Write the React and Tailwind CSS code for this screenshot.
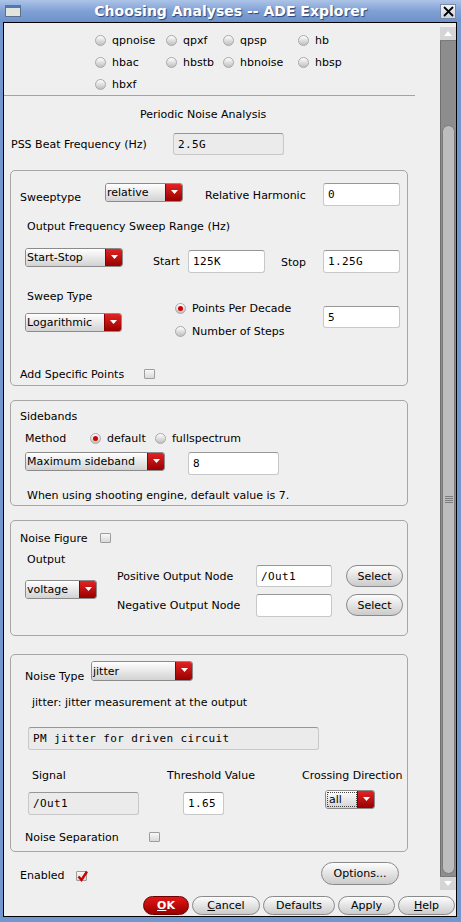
import React from "react";

const MONO = "font-['DejaVu_Sans_Mono',monospace] text-[11px] tracking-[0.4px]";

function Radio({ on }) {
  return (
    <span className="flex h-[11px] w-[11px] shrink-0 items-center justify-center rounded-full border border-[#a9a9a9] bg-linear-to-b from-white to-[#c0c0c0]">
      {on && <span className="h-[5px] w-[5px] rounded-full bg-[#d40000]" />}
    </span>
  );
}

function Check({ on, className = "" }) {
  return (
    <span
      className={`relative block h-[10px] w-[11px] shrink-0 rounded-[1px] border border-[#9d9d9d] bg-linear-to-b from-[#f8f8f8] to-[#d9d9d9] ${className}`}
    >
      {on && (
        <svg className="absolute left-[0px] top-[-2px]" width="11" height="12" viewBox="0 0 11 12">
          <path d="M1.5 6.5 L4.5 10 L10 1.5" fill="none" stroke="#d00000" strokeWidth="2.4" />
        </svg>
      )}
    </span>
  );
}

function Combo({ label, className = "", focus }) {
  return (
    <div className={`flex h-[19px] shrink-0 overflow-hidden rounded-[3px] border border-[#8b8b8b] ${className}`}>
      <div className="flex min-w-0 flex-1 items-center bg-linear-to-b from-white to-[#d2d2d2] pl-[1px]">
        {focus ? (
          <span className="flex h-[15px] flex-1 items-center border border-dotted border-[#444] pl-[1px]">{label}</span>
        ) : (
          label
        )}
      </div>
      <div className="flex w-[17px] shrink-0 items-center justify-center border-l border-[#8a0000] bg-linear-to-b from-[#e42222] to-[#980000]">
        <svg className="mb-[2px]" width="7" height="4" viewBox="0 0 7 4">
          <path d="M0 0h7L3.5 4z" fill="#fff" />
        </svg>
      </div>
    </div>
  );
}

function Field({ value, className = "", disabled }) {
  return (
    <div
      className={`flex shrink-0 items-center rounded-[3px] border border-[#c8c8c8] border-t-[#979797] pl-[4px] ${MONO} ${
        disabled ? "bg-[#ebebeb]" : "bg-white"
      } ${className}`}
    >
      {value}
    </div>
  );
}

function Btn({ children, className = "" }) {
  return (
    <button
      type="button"
      className={`flex shrink-0 items-center justify-center rounded-full border border-[#8a8a8a] bg-linear-to-b from-[#fdfdfd] to-[#cbcbcb] text-[11px] text-black ${className}`}
    >
      {children}
    </button>
  );
}

function Group({ className = "", children }) {
  return (
    <div className={`ml-[6px] flex w-[398px] shrink-0 flex-col rounded-[5px] border border-[#a6a6a6] pl-[9px] ${className}`}>
      {children}
    </div>
  );
}

const analyses = [
  ["qpnoise", "qpxf", "qpsp", "hb"],
  ["hbac", "hbstb", "hbnoise", "hbsp"],
  ["hbxf"],
];
const colW = ["w-[71px]", "w-[57px]", "w-[75px]", "w-[60px]"];

function TitleBar() {
  return (
    <div className="relative flex h-[22px] shrink-0 items-center bg-linear-to-b from-[#adc3e7] via-[#80a1d5] to-[#6d91cb] pl-[5px] pr-[5px]">
      <div className="h-[12px] w-[16px] border border-[#5d6f8f] border-t-[3px] border-t-[#4f78b5] bg-[#e2e5dc]" />
      <div className="flex-1 text-center text-[14px] font-bold text-white [text-shadow:1px_1px_1px_#2b4777]">
        Choosing Analyses -- ADE Explorer
      </div>
      <div className="flex h-[15px] w-[16px] items-center justify-center border border-[#7b8aa5] bg-linear-to-b from-[#f2f5fa] to-[#c9d3e3]">
        <svg width="11" height="11" viewBox="0 0 11 11">
          <path d="M1 1L10 10M10 1L1 10" stroke="#000" strokeWidth="1.8" />
        </svg>
      </div>
    </div>
  );
}

function ScrollBar() {
  return (
    <div className="flex w-[16px] shrink-0 flex-col pb-[1px] pt-[4px]">
      <div className="flex h-[14px] items-center justify-center border-b border-[#7b7b7b] bg-[#d5d5d5]">
        <svg width="8" height="5" viewBox="0 0 8 5">
          <path d="M4 0L8 5H0z" fill="#fff" />
        </svg>
      </div>
      <div className="flex flex-1 flex-col border-l border-[#707070] bg-[#8d8d8d] px-[1px] pb-[2px] pt-[84px]">
        <div className="flex flex-1 items-center justify-center rounded-full border border-[#7a7a7a] bg-[#bdbdbd]">
          <div className="flex w-[8px] flex-col gap-[1px]">
            <div className="h-px bg-[#7c7c7c]" />
            <div className="h-px bg-[#7c7c7c]" />
            <div className="h-px bg-[#7c7c7c]" />
            <div className="h-px bg-[#7c7c7c]" />
          </div>
        </div>
      </div>
      <div className="flex h-[14px] items-center justify-center border-t border-[#7b7b7b] bg-[#d5d5d5]">
        <svg width="8" height="5" viewBox="0 0 8 5">
          <path d="M0 0H8L4 5z" fill="#fff" />
        </svg>
      </div>
    </div>
  );
}

export default function App() {
  return (
    <div className="flex h-[922px] w-[461px] flex-col bg-[#7297cf] font-['DejaVu_Sans',sans-serif] text-[11px] leading-[13px] text-black">
      <TitleBar />
      <div className="mb-[5px] ml-[3px] mr-[4px] flex flex-1 flex-col border border-black bg-[#efefef]">
        <div className="flex h-[868px] shrink-0">
          <div className="flex flex-1 flex-col overflow-hidden">
            {/* analysis type radios */}
            <div className="flex shrink-0 flex-col pl-[91px] pt-[6px]">
              {analyses.map((row, r) => (
                <div key={r} className="flex h-[22px] items-center">
                  {row.map((name, c) => (
                    <div key={name} className={`flex items-center ${colW[c]}`}>
                      <Radio />
                      <span className="ml-[6px]">{name}</span>
                    </div>
                  ))}
                </div>
              ))}
            </div>
            <div className="h-0 w-[411px] shrink-0 border-t border-[#a3a3a3]" />

            <div className="mt-[8px] flex h-[20px] shrink-0 items-center pl-[136px]">Periodic Noise Analysis</div>

            <div className="mt-[9px] flex h-[22px] shrink-0 items-center pl-[7px]">
              <span className="w-[162px]">PSS Beat Frequency (Hz)</span>
              <Field value="2.5G" disabled className="h-[22px] w-[111px]" />
            </div>

            {/* sweep */}
            <Group className="mt-[15px] h-[216px]">
              <div className="mt-[12px] flex items-start">
                <span className="mt-[8px] w-[85px]">Sweeptype</span>
                <Combo label="relative" className="w-[78px]" />
                <span className="ml-[22px] mt-[6px] w-[118px]">Relative Harmonic</span>
                <Field value="0" className="h-[23px] w-[77px]" />
              </div>
              <div className="ml-[7px] mt-[14px]">Output Frequency Sweep Range (Hz)</div>
              <div className="mt-[15px] flex items-start">
                <Combo label="Start-Stop" className="ml-[5px] w-[98px]" />
                <span className="ml-[30px] mt-[7px] w-[35px]">Start</span>
                <Field value="125K" className="mt-[2px] h-[23px] w-[77px]" />
                <span className="ml-[16px] mt-[8px] w-[42px]">Stop</span>
                <Field value="1.25G" className="mt-[2px] h-[23px] w-[77px]" />
              </div>
              <div className="mt-[17px] flex items-start">
                <div className="flex w-[155px] flex-col">
                  <span className="ml-[7px] h-[13px]">Sweep Type</span>
                  <Combo label="Logarithmic" className="ml-[5px] mt-[10px] w-[97px]" />
                </div>
                <div className="flex w-[148px] flex-col pt-[7px]">
                  <div className="flex h-[23px] items-center">
                    <Radio on />
                    <span className="ml-[6px]">Points Per Decade</span>
                  </div>
                  <div className="flex h-[23px] items-center">
                    <Radio />
                    <span className="ml-[6px]">Number of Steps</span>
                  </div>
                </div>
                <Field value="5" className="mt-[16px] h-[22px] w-[77px]" />
              </div>
              <div className="mt-[24px] flex h-[14px] items-center">
                <span className="w-[124px]">Add Specific Points</span>
                <Check />
              </div>
            </Group>

            {/* sidebands */}
            <Group className="mt-[14px] h-[106px]">
              <div className="mt-[9px]">Sidebands</div>
              <div className="mt-[9px] flex h-[13px] items-center">
                <span className="ml-[5px] w-[65px]">Method</span>
                <Radio on />
                <span className="ml-[6px] w-[48px]">default</span>
                <Radio />
                <span className="ml-[6px]">fullspectrum</span>
              </div>
              <div className="mt-[7px] flex items-start">
                <Combo label="Maximum sideband" className="ml-[5px] w-[140px]" />
                <Field value="8" className="ml-[23px] h-[23px] w-[91px]" />
              </div>
              <div className="ml-[7px] mt-[14px]">When using shooting engine, default value is 7.</div>
            </Group>

            {/* noise figure */}
            <Group className="mt-[14px] h-[116px]">
              <div className="mt-[10px] flex h-[14px] items-center">
                <span className="w-[80px]">Noise Figure</span>
                <Check />
              </div>
              <div className="mt-[8px] flex items-start">
                <div className="flex w-[97px] flex-col">
                  <span className="ml-[7px] h-[13px]">Output</span>
                  <Combo label="voltage" className="ml-[5px] mt-[14px] w-[72px]" />
                </div>
                <div className="flex flex-col pt-[12px]">
                  <div className="flex h-[22px] items-center">
                    <span className="w-[139px]">Positive Output Node</span>
                    <Field value="/Out1" className="h-[22px] w-[76px]" />
                    <Btn className="ml-[14px] h-[22px] w-[57px]">Select</Btn>
                  </div>
                  <div className="mt-[7px] flex h-[22px] items-center">
                    <span className="w-[139px]">Negative Output Node</span>
                    <Field value="" className="h-[23px] w-[76px]" />
                    <Btn className="ml-[14px] h-[22px] w-[57px]">Select</Btn>
                  </div>
                </div>
              </div>
            </Group>

            {/* noise type */}
            <Group className="mt-[18px] h-[198px]">
              <div className="mt-[6px] flex items-start">
                <span className="ml-[5px] mt-[9px] w-[66px]">Noise Type</span>
                <Combo label="jitter" className="h-[20px] w-[102px]" />
              </div>
              <div className="ml-[12px] mt-[13px]">jitter: jitter measurement at the output</div>
              <Field
                value="PM jitter for driven circuit"
                disabled
                className="ml-[8px] mt-[18px] h-[23px] w-[291px]"
              />
              <div className="mt-[19px] flex h-[13px] items-center">
                <span className="ml-[12px] w-[135px]">Signal</span>
                <span className="w-[135px]">Threshold Value</span>
                <span>Crossing Direction</span>
              </div>
              <div className="mt-[8px] flex items-start">
                <Field value="/Out1" disabled className="ml-[8px] mt-[2px] h-[23px] w-[111px]" />
                <Field value="1.65" className="ml-[44px] mt-[2px] h-[23px] w-[41px]" />
                <Combo label="all" focus className="ml-[101px] w-[50px]" />
              </div>
              <div className="mt-[15px] flex h-[14px] items-center">
                <span className="ml-[5px] w-[124px]">Noise Separation</span>
                <Check />
              </div>
            </Group>

            <div className="mt-[10px] flex h-[23px] shrink-0 items-start">
              <span className="ml-[16px] mt-[7px] w-[56px]">Enabled</span>
              <Check on className="mt-[9px]" />
              <Btn className="ml-[234px] h-[23px] w-[78px]">Options...</Btn>
            </div>
          </div>
          <ScrollBar />
        </div>

        <div className="flex flex-1 items-start justify-end gap-[3px] pr-[1px] pt-[5px]">
          <button
            type="button"
            className="flex h-[19px] w-[46px] items-center justify-center rounded-full border border-[#6e0000] bg-linear-to-b from-[#e41616] to-[#9a0000] text-[11px] font-bold text-white"
          >
            <u>O</u>K
          </button>
          <Btn className="h-[19px] w-[68px]">
            <u>C</u>ancel
          </Btn>
          <Btn className="h-[19px] w-[72px]">Defaults</Btn>
          <Btn className="h-[19px] w-[57px]">Apply</Btn>
          <Btn className="h-[19px] w-[57px]">
            <u>H</u>elp
          </Btn>
        </div>
      </div>
    </div>
  );
}
